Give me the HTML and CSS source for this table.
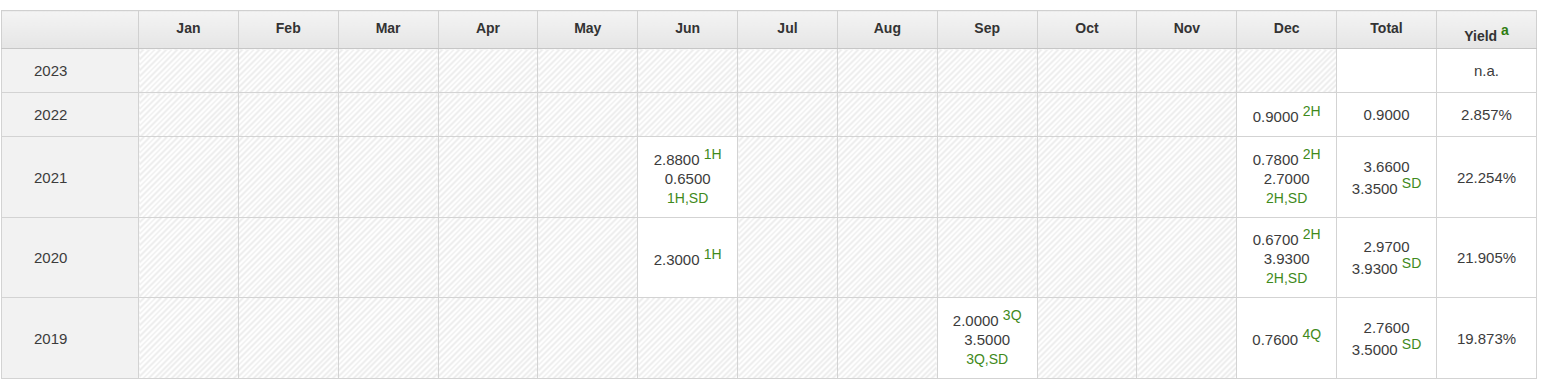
FILE: index.html
```html
<!DOCTYPE html>
<html>
<head>
<meta charset="utf-8">
<link rel="stylesheet" href="styles.css">
</head>
<body>
<table class="divs">
  <colgroup>
    <col class="c-year">
    <col span="14" class="c-m">
  </colgroup>
  <thead>
    <tr class="hrow">
      <th></th>
      <th>Jan</th><th>Feb</th><th>Mar</th><th>Apr</th><th>May</th><th>Jun</th>
      <th>Jul</th><th>Aug</th><th>Sep</th><th>Oct</th><th>Nov</th><th>Dec</th>
      <th>Total</th>
      <th class="yield">Yield <sup class="note">a</sup></th>
    </tr>
  </thead>
  <tbody>
    <tr class="r45">
      <td class="yr">2023</td>
      <td class="na"></td><td class="na"></td><td class="na"></td><td class="na"></td><td class="na"></td><td class="na"></td>
      <td class="na"></td><td class="na"></td><td class="na"></td><td class="na"></td><td class="na"></td><td class="na"></td>
      <td></td>
      <td>n.a.</td>
    </tr>
    <tr class="r43">
      <td class="yr">2022</td>
      <td class="na"></td><td class="na"></td><td class="na"></td><td class="na"></td><td class="na"></td><td class="na"></td>
      <td class="na"></td><td class="na"></td><td class="na"></td><td class="na"></td><td class="na"></td>
      <td>0.9000 <sup class="g">2H</sup></td>
      <td>0.9000</td>
      <td>2.857%</td>
    </tr>
    <tr class="r81">
      <td class="yr">2021</td>
      <td class="na"></td><td class="na"></td><td class="na"></td><td class="na"></td><td class="na"></td>
      <td>2.8800 <sup class="g">1H</sup><br>0.6500<br><span class="g">1H,SD</span></td>
      <td class="na"></td><td class="na"></td><td class="na"></td><td class="na"></td><td class="na"></td>
      <td>0.7800 <sup class="g">2H</sup><br>2.7000<br><span class="g">2H,SD</span></td>
      <td>3.6600<br>3.3500 <sup class="g">SD</sup></td>
      <td>22.254%</td>
    </tr>
    <tr class="r80">
      <td class="yr">2020</td>
      <td class="na"></td><td class="na"></td><td class="na"></td><td class="na"></td><td class="na"></td>
      <td>2.3000 <sup class="g">1H</sup></td>
      <td class="na"></td><td class="na"></td><td class="na"></td><td class="na"></td><td class="na"></td>
      <td>0.6700 <sup class="g">2H</sup><br>3.9300<br><span class="g">2H,SD</span></td>
      <td>2.9700<br>3.9300 <sup class="g">SD</sup></td>
      <td>21.905%</td>
    </tr>
    <tr class="r81">
      <td class="yr">2019</td>
      <td class="na"></td><td class="na"></td><td class="na"></td><td class="na"></td><td class="na"></td><td class="na"></td>
      <td class="na"></td><td class="na"></td>
      <td>2.0000 <sup class="g">3Q</sup><br>3.5000<br><span class="g">3Q,SD</span></td>
      <td class="na"></td><td class="na"></td>
      <td>0.7600 <sup class="g">4Q</sup></td>
      <td>2.7600<br>3.5000 <sup class="g">SD</sup></td>
      <td>19.873%</td>
    </tr>
  </tbody>
</table>
</body>
</html>
```

FILE: styles.css
```css
html, body {
  margin: 0;
  padding: 0;
  background: #fff;
}
body {
  padding: 10px 0 0 1px;
  font-family: "Liberation Sans", Arial, sans-serif;
  font-size: 15px;
  color: #3c3c3c;
}
.divs {
  border-collapse: collapse;
  table-layout: fixed;
  width: 1536px;
  border: 1px solid #cfcfcf;
}
.c-year { width: 137px; }
th, td {
  border: 1px solid #d3d3d3;
  padding: 0 4px;
  text-align: center;
  vertical-align: middle;
  line-height: 19px;
}
th {
  height: 35px;
  padding-bottom: 2px;
  font-size: 14px;
  font-weight: bold;
  color: #333;
  background: linear-gradient(#f4f4f4, #e5e5e5);
  border-color: #d0d0d0;
  border-bottom: 1px solid #c6c6c6;
}
th.yield {
  height: 27px;
  padding-top: 10px;
  padding-bottom: 0;
}
sup {
  font-size: 14px;
  line-height: 14px;
  vertical-align: 6px;
}
sup.note {
  color: #2f7d10;
  font-size: 14px;
  font-weight: bold;
}
.g { color: #3f8a1c; }
span.g { font-size: 14px; }
td.yr {
  background: #f2f2f2;
  text-align: left;
  padding-left: 32px;
}
td.na {
  background: repeating-linear-gradient(135deg, #ffffff 0, #ffffff 2px, #ededed 2px, #ededed 4px);
}
.r45 td { height: 43px; }
.r43 td { height: 43px; }
.r81 td { height: 80px; }
.r80 td { height: 79px; }
```
